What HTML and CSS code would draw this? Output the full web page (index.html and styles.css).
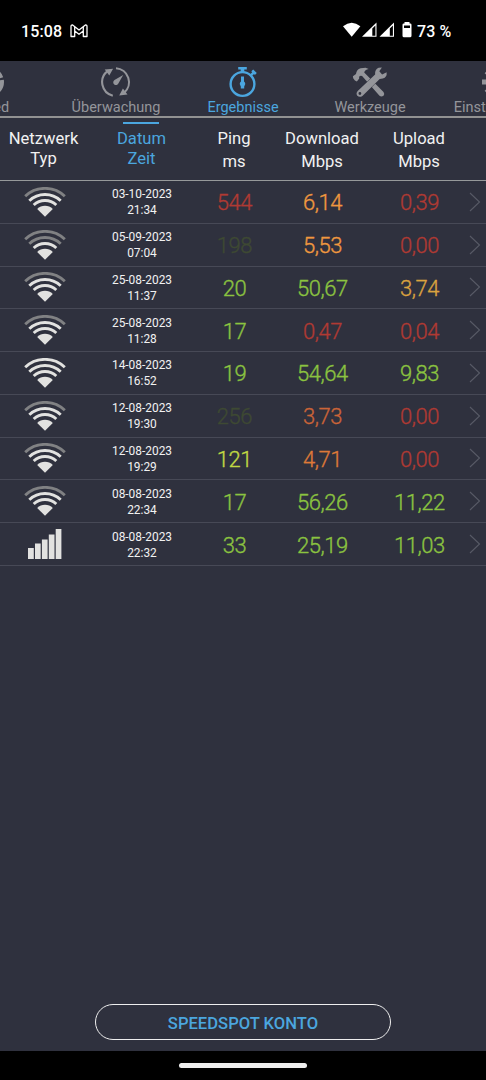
FILE: index.html
```html
<!DOCTYPE html>
<html lang="de">
<head>
<meta charset="utf-8">
<title>Ergebnisse</title>
<link rel="stylesheet" href="styles.css">
</head>
<body>
<svg class="defs" width="0" height="0">
  <symbol id="arcs" viewBox="0 0 42 30">
    <g fill="none" stroke-width="2.9">
      <path class="a4" d="M1.200 9.200A29 29 0 0 1 40.800 9.200"/>
      <path class="a3" d="M5.300 13.700A22.800 22.800 0 0 1 36.700 13.700"/>
      <path d="M9.700 18A16.500 16.500 0 0 1 32.300 18"/>
    </g>
    <path fill="#e2e2e0" d="M13.200 22A11 11 0 0 1 28.800 22L21 29.800Z"/>
  </symbol>
  <symbol id="next" viewBox="0 0 12 20"><path d="M1 1L10.500 10L1 19" fill="none" stroke="#585a66" stroke-width="1.1"/></symbol>
</svg>
<div class="screen">
  <header class="status">
    <span class="time">15:08</span>
    <svg class="mail" width="18" height="14" viewBox="0 0 18 14"><path d="M1 12.500V2.500Q1 .8 2.600 1L9 6L15.400 1Q17 .8 17 2.500V12.500H13.300V7L9 10.300L4.700 7V12.500ZM4.700 7V3M13.300 7V3" fill="none" stroke="#fff" stroke-width="1.300" stroke-linejoin="round"/></svg>
    <svg class="signals" width="70" height="17" viewBox="0 0 70 17">
      <path d="M0 4.200Q8.700-2.800 17.400 4.200L8.700 14.800Z" fill="#fff"/>
      <path d="M19 14.800L33.500.5V14.800Z" fill="#fff"/><path d="M29.300 6.500L32.400 3.400V13.700H29.300Z" fill="#000"/>
      <path d="M36.500 14.800L51 .5V14.800Z" fill="#fff"/><path d="M46.800 6.500L49.900 3.400V13.700H46.800Z" fill="#000"/>
      <path d="M61.500 0H66.500V1.500H67.200Q68.500 1.500 68.500 2.800V13.800Q68.500 15.300 67 15.300H61Q59.500 15.300 59.500 13.800V2.800Q59.500 1.500 60.800 1.500H61.500Z" fill="#fff"/><path d="M61 3.500H67V6H61Z" fill="#000"/>
    </svg>
    <span class="charge">73 %</span>
  </header>
  <nav class="tabs">
    <a class="tab"><svg width="32" height="32" viewBox="0 0 32 32"><circle cx="16" cy="16" r="11.500" fill="none" stroke="currentColor" stroke-width="7" stroke-dasharray="8 2"/></svg><span>Speed</span></a>
    <a class="tab"><svg width="32" height="32" viewBox="0 0 32 32">
      <g fill="none" stroke="currentColor" stroke-width="2.100"><path d="M12.800 29.700A14 14 0 0 1 7.500 5.100"/><path d="M16 2.200A14 14 0 0 1 24.200 26.700"/></g>
      <path fill="currentColor" d="M4.700 3.400L13.100 2.700L9.300 9.500ZM27.500 28.600L19.200 29.400L22.900 22.600ZM23.200 8.900L18.500 17.200A2.700 2.700 0 1 1 14.500 14.100Z"/>
    </svg><span>Überwachung</span></a>
    <a class="tab active"><svg width="32" height="32" viewBox="0 0 32 32">
      <circle cx="15.500" cy="18" r="11.900" fill="none" stroke="currentColor" stroke-width="2.400"/>
      <path fill="currentColor" d="M11.200 1H19.800V3.400H17.300V6H13.700V3.400H11.200ZM22.400 9L25.200 6.200L24.300 5.300L26.200 3.400L29.800 7L27.900 8.900L27 8L24.200 10.800ZM14 10.500H17V15.500Q18.500 16.500 18.200 18.200L17.200 20.500V22.500H13.800V20.500L12.800 18.200Q12.500 16.500 14 15.500Z"/>
    </svg><span>Ergebnisse</span></a>
    <a class="tab"><svg width="36" height="32" viewBox="0 0 36 32">
      <path fill="currentColor" d="M1.200 12.200L.9 10.200L4 8Q4.500 3.500 8.600 2.200L13.600 1.700L16.700 3.100Q12.800 3.800 12.200 6.600L31.500 25.900Q33 28 31.500 29.700Q29.500 31.300 27.500 29.800L10.100 10.100Q8.500 9.200 7.100 10.700L7.200 12.600L4.900 15.500L2.900 14.600Z"/>
      <path d="M10 25.700L25 11" stroke="#2f313e" stroke-width="7.200"/>
      <path fill="currentColor" fill-rule="evenodd" d="M5.700 24.900L23.100 8.400Q22.700 3.500 26.600 1.800L29.900 1.600L27.300 5.200L30.100 8.600L34.600 6.200Q35.300 11.200 30.800 12.600L27.700 13L10.400 29.900Q7.400 31.700 5.300 29.700Q3.600 27.300 5.700 24.900ZM9.300 27.500A1.400 1.400 0 1 0 6.500 27.500A1.400 1.400 0 1 0 9.300 27.500Z"/>
    </svg><span>Werkzeuge</span></a>
    <a class="tab"><svg width="32" height="32" viewBox="0 0 32 32"><g fill="none" stroke="currentColor"><circle cx="16" cy="16" r="8" stroke-width="5"/><path stroke-width="5" d="M16 1V7M16 25V31M1 16H7M25 16H31M5.400 5.400L10 10M22 22L26.600 26.600M5.400 26.600L10 22M22 10L26.600 5.400"/></g></svg><span>Einstellungen</span></a>
  </nav>
  <div class="row head">
    <div class="kind">Netzwerk<br>Typ</div><div class="date sorted">Datum<br>Zeit</div><div class="wide">Ping<br>ms</div><div class="wide">Download<br>Mbps</div><div class="wide">Upload<br>Mbps</div>
  </div>
  <main class="results">
    <div class="row"><svg class="wifi s3"><use href="#arcs"/></svg><div class="date">03-10-2023<br>21:34</div><b class="red">544</b><b class="amber">6,14</b><b class="red">0,39</b><svg class="go"><use href="#next"/></svg></div>
    <div class="row"><svg class="wifi s2"><use href="#arcs"/></svg><div class="date">05-09-2023<br>07:04</div><b class="dim">198</b><b class="amber">5,53</b><b class="red">0,00</b><svg class="go"><use href="#next"/></svg></div>
    <div class="row"><svg class="wifi s3"><use href="#arcs"/></svg><div class="date">25-08-2023<br>11:37</div><b class="green">20</b><b class="green">50,67</b><b class="gold">3,74</b><svg class="go"><use href="#next"/></svg></div>
    <div class="row"><svg class="wifi s3"><use href="#arcs"/></svg><div class="date">25-08-2023<br>11:28</div><b class="green">17</b><b class="red">0,47</b><b class="red">0,04</b><svg class="go"><use href="#next"/></svg></div>
    <div class="row"><svg class="wifi s4"><use href="#arcs"/></svg><div class="date">14-08-2023<br>16:52</div><b class="green">19</b><b class="green">54,64</b><b class="green">9,83</b><svg class="go"><use href="#next"/></svg></div>
    <div class="row"><svg class="wifi s3"><use href="#arcs"/></svg><div class="date">12-08-2023<br>19:30</div><b class="dim">256</b><b class="rust">3,73</b><b class="red">0,00</b><svg class="go"><use href="#next"/></svg></div>
    <div class="row"><svg class="wifi s3"><use href="#arcs"/></svg><div class="date">12-08-2023<br>19:29</div><b class="lime">121</b><b class="orange">4,71</b><b class="red">0,00</b><svg class="go"><use href="#next"/></svg></div>
    <div class="row"><svg class="wifi s3"><use href="#arcs"/></svg><div class="date">08-08-2023<br>22:34</div><b class="green">17</b><b class="green">56,26</b><b class="green">11,22</b><svg class="go"><use href="#next"/></svg></div>
    <div class="row"><svg class="wifi" viewBox="0 0 42 30"><path fill="#e2e2e0" d="M4 19H9.800V30H4ZM11 14.500H16.700V30H11ZM17.900 10.500H23.600V30H17.900ZM24.800 5.500H30.500V30H24.800ZM31.700 0H37.400V30H31.700Z"/></svg><div class="date">08-08-2023<br>22:32</div><b class="green">33</b><b class="green">25,19</b><b class="green">11,03</b><svg class="go"><use href="#next"/></svg></div>
  </main>
  <footer class="account"><button>SPEEDSPOT KONTO</button></footer>
  <div class="gesture"><i></i></div>
</div>
</body>
</html>
```
FILE: styles.css
```css
* { box-sizing: border-box; }
body { margin: 0; background: #000; font-family: Roboto, sans-serif; }
.defs { position: absolute; }
.screen { width: 486px; height: 1080px; display: flex; flex-direction: column; overflow: hidden; background: #2f313e; color: #f2f2f2; }

.status { flex: none; height: 61px; background: #000; display: flex; align-items: center; padding: 0 33px 0 21px; color: #fff; font-size: 16px; font-weight: 500; letter-spacing: .1px; }
.time { width: 41px; margin-right: 8px; white-space: nowrap; }
.time, .charge { padding-top: 1px; }
.signals { margin-left: auto; margin-right: 4px; }
.charge { width: 36px; white-space: nowrap; }

.tabs { flex: none; height: 57px; display: flex; justify-content: center; border-bottom: 2px solid #929292; overflow: hidden; }
.tab { flex: none; width: 127px; padding-top: 5px; display: flex; flex-direction: column; align-items: center; color: #94959a; font-size: 14.500px; line-height: 18px; }
.tab svg { flex: none; }
.tab span { padding-top: 1px; }
.active { color: #4ba6df; }

.row { display: grid; grid-template-columns: 89px 106px 79px 97px 97px 18px; align-items: center; justify-items: center; }
.head { flex: none; height: 63px; border-bottom: 1px solid #96999a; font-size: 16.600px; line-height: 19.500px; text-align: center; align-items: start; }
.head > div { padding-top: 11px; }
.head .kind { margin-left: -2px; }
.head .wide { line-height: 23px; padding-top: 9px; margin-left: -1px; }
.head .date { font-size: 16.600px; line-height: 19.500px; }
.head .sorted { color: #4ba6df; padding-top: 7px; margin-left: -1px; }
.sorted::before { content: ""; display: block; width: 36px; height: 2px; margin: -3px auto 5px; background: #4ba6df; }

.results { flex: 1; }
.results .row { height: 42.780px; border-bottom: 1px solid #474956; }
.wifi { width: 42px; height: 30px; }
#arcs g path { stroke: #e2e2e0; }
#arcs g .a4 { stroke: var(--a4); }
#arcs g .a3 { stroke: var(--a3); }
.s4 { --a4: #e2e2e0; --a3: #e2e2e0; }
.s3 { --a4: #808183; --a3: #e2e2e0; }
.s2 { --a4: #808183; --a3: #808183; }
.date { text-align: center; font-size: 11.900px; line-height: 16px; }
.results .date { padding-top: 1px; }
.row b { font-weight: 300; font-size: 22px; line-height: 26px; letter-spacing: -.45px; padding-top: 3px; -webkit-text-stroke: .35px currentColor; }
.go { width: 12px; height: 20px; margin-left: -4px; }
.red { color: #b03a33; }
.amber { color: #f0983e; }
.gold { color: #dba33f; }
.orange { color: #de7938; }
.rust { color: #cb6438; }
.green { color: #8bc340; }
.lime { color: #c0d843; }
.dim { color: #3e4933; }

.account { flex: none; height: 47px; display: flex; justify-content: center; }
.account button { width: 296px; height: 36px; border: 1.500px solid #eee; border-radius: 18px; background: none; color: #4ba6df; font: 500 16.600px Roboto, sans-serif; padding: 2px 0 0; }
.gesture { flex: none; height: 29px; background: #000; display: flex; justify-content: center; align-items: center; }
.gesture i { width: 128px; height: 5px; border-radius: 3px; background: #eee; }
```
